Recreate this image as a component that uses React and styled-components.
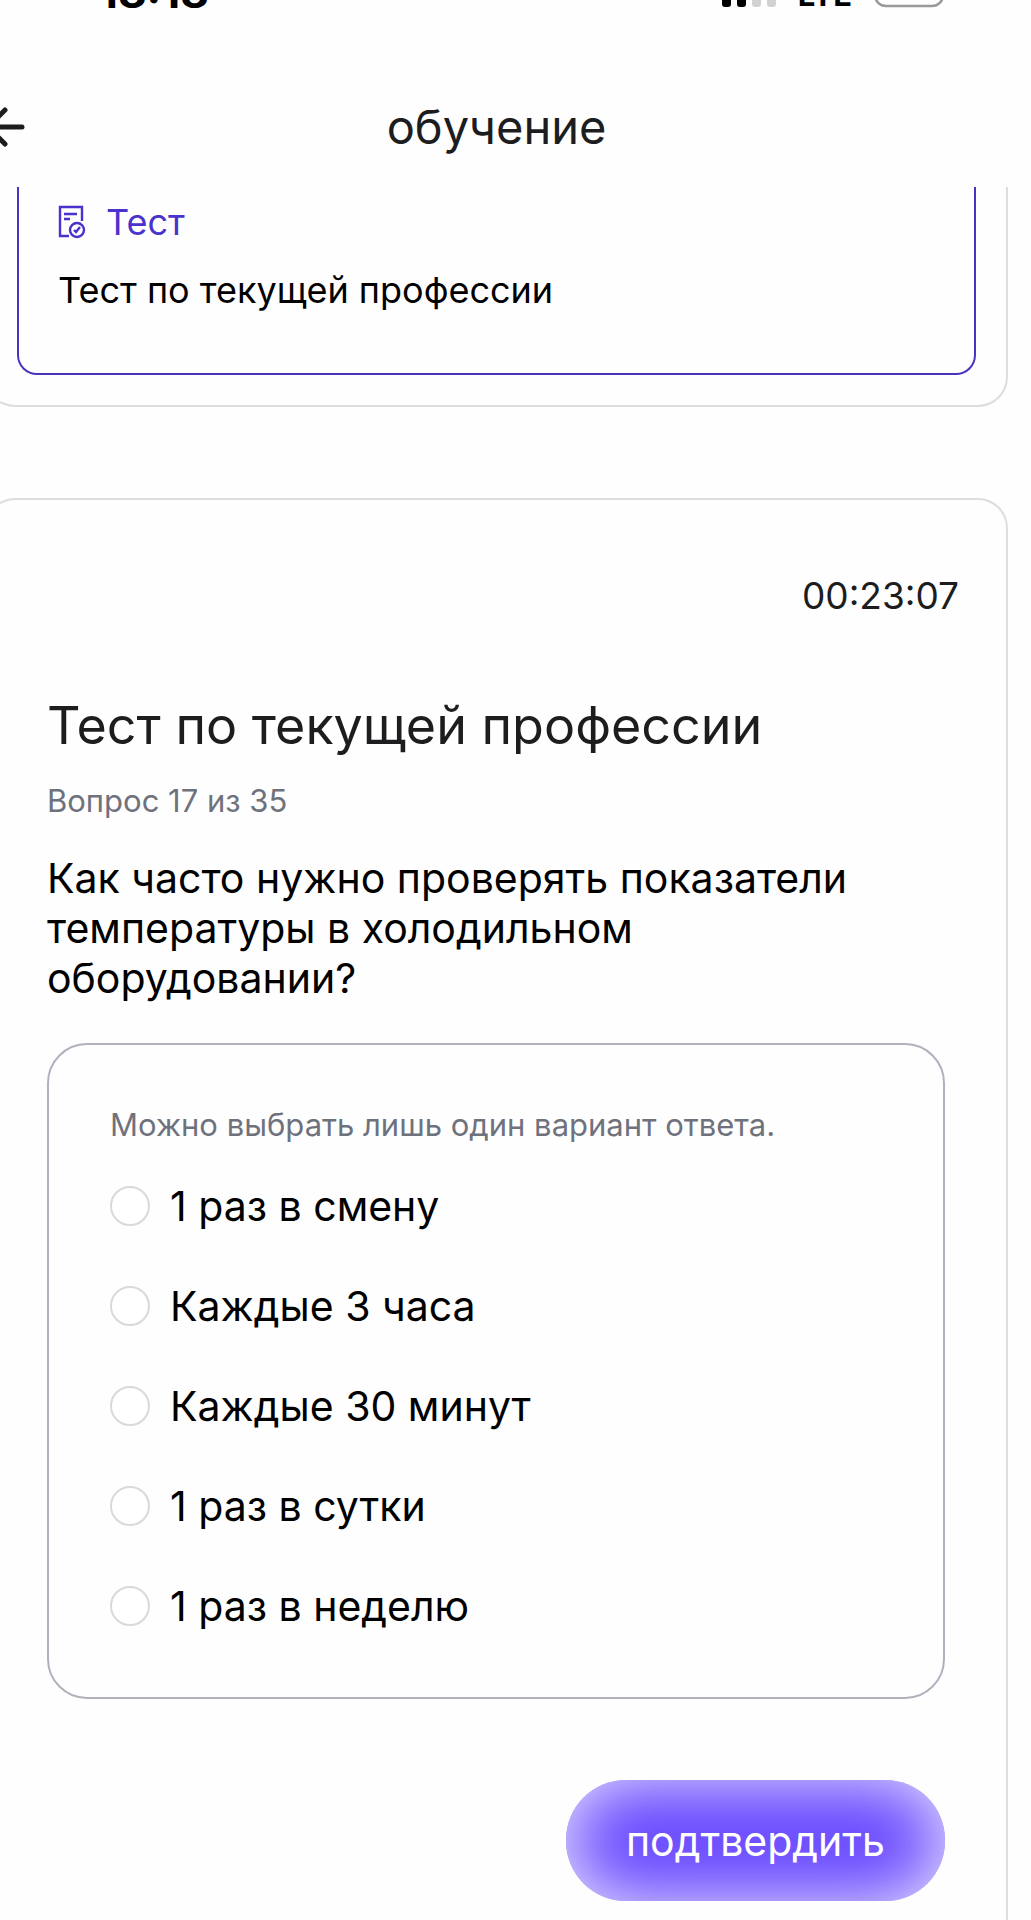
import React, { useState } from "react";
import styled, { createGlobalStyle } from "styled-components";

const GlobalStyle = createGlobalStyle`
  * {
    box-sizing: border-box;
  }

  body {
    margin: 0;
    background: #fefefe;
    color: #000000;
    font-family: "Inter", "Liberation Sans", sans-serif;
  }
`;

const Screen = styled.div`
  display: flex;
  flex-direction: column;
  height: 100vh;
  overflow: hidden;
`;

const StatusBar = styled.div`
  display: flex;
  justify-content: space-between;
  align-items: flex-end;
  flex-shrink: 0;
  height: 8px;
  padding: 0 87px 0 99px;
  overflow: hidden;
`;

const Time = styled.span`
  font-size: 44px;
  line-height: 32px;
  font-weight: 700;
`;

const StatusIcons = styled.div`
  display: flex;
  align-items: flex-end;
  gap: 22px;
`;

const Network = styled.span`
  font-size: 31px;
  line-height: 26px;
  font-weight: 700;
`;

const Header = styled.header`
  display: grid;
  grid-template-columns: 40px 1fr 78px;
  align-items: center;
  flex-shrink: 0;
  height: 179px;
  padding-top: 58px;
`;

const BackButton = styled.button`
  display: flex;
  padding: 0;
  border: none;
  background: none;
  cursor: pointer;
`;

const Title = styled.h1`
  margin: 0;
  font-size: 47px;
  line-height: 56px;
  font-weight: 400;
  color: #1d1d1f;
  text-align: center;
`;

const Content = styled.main`
  display: flex;
  flex-direction: column;
  flex: 1;
  gap: 91px;
  margin-left: -15px;
  padding-right: 23px;
  overflow: hidden;
`;

const LessonCard = styled.section`
  flex-shrink: 0;
  padding: 0 30px;
  padding-bottom: 30px;
  border: 2px solid #dddddd;
  border-top: none;
  border-radius: 0 0 30px 30px;
`;

const LessonItem = styled.a`
  display: block;
  padding: 13px 39px 61px;
  border: 2px solid #4a32bd;
  border-top: none;
  border-radius: 0 0 20px 20px;
  color: #000000;
  text-decoration: none;
`;

const LessonKind = styled.span`
  display: flex;
  align-items: center;
  gap: 20px;
  margin-bottom: 24px;
  font-size: 36px;
  line-height: 44px;
  color: #4a32cc;
`;

const LessonName = styled.span`
  display: block;
  font-size: 36px;
  line-height: 44px;
`;

const TestCard = styled.section`
  flex: 1 0 auto;
  padding: 74px 47px 0 60px;
  border: 2px solid #dddddd;
  border-bottom: none;
  border-radius: 30px 30px 0 0;
`;

const Timer = styled.time`
  display: block;
  margin-bottom: 78px;
  font-size: 37px;
  line-height: 44px;
  color: #1d1d1f;
  text-align: right;
`;

const TestBody = styled.form`
  display: flex;
  flex-direction: column;
  padding-right: 14px;
`;

const TestTitle = styled.h2`
  margin: 0 0 25px;
  font-size: 52px;
  line-height: 60px;
  font-weight: 400;
  color: #1d1d1f;
`;

const Muted = styled.p`
  margin: 0;
  font-size: 31px;
  line-height: 40px;
  color: #6f727d;
`;

const Question = styled.p`
  margin: 32px 0 40px;
  font-size: 41px;
  line-height: 50px;
`;

const Answers = styled.fieldset`
  min-width: 0;
  margin: 0 0 81px;
  padding: 60px 60px 66px 61px;
  border: 2px solid #afb2bc;
  border-radius: 40px;
`;

const AnswerList = styled.div`
  display: flex;
  flex-direction: column;
  gap: 50px;
  margin-top: 36px;
`;

const Answer = styled.label`
  display: flex;
  align-items: center;
  gap: 20px;
  font-size: 41px;
  line-height: 50px;
  cursor: pointer;
`;

const Radio = styled.input`
  appearance: none;
  flex-shrink: 0;
  width: 40px;
  height: 40px;
  margin: 0;
  border: 2px solid #d9d9d9;
  border-radius: 50%;
  background: #ffffff;
  cursor: pointer;

  &:checked {
    border: 12px solid #6f51ff;
  }
`;

const ConfirmButton = styled.button`
  align-self: flex-end;
  padding: 36px 60px 35px;
  border: none;
  border-radius: 60px;
  background: #6746ff;
  box-shadow: inset 0 0 70px rgba(255, 255, 255, 0.9);
  color: #ffffff;
  font-family: inherit;
  font-size: 41px;
  line-height: 50px;
  cursor: pointer;
`;

const answers = [
  "1 раз в смену",
  "Каждые 3 часа",
  "Каждые 30 минут",
  "1 раз в сутки",
  "1 раз в неделю",
];

const SignalIcon = () => (
  <svg width="54" height="24" viewBox="0 0 54 24" aria-hidden="true">
    <rect x="0" y="8" width="9" height="15" rx="3" fill="#000000" />
    <rect x="15" y="6" width="9" height="17" rx="3" fill="#000000" />
    <rect x="30" y="3" width="9" height="20" rx="3" fill="#d2d2d2" />
    <rect x="45" y="0" width="9" height="23" rx="3" fill="#d2d2d2" />
  </svg>
);

const BatteryIcon = () => (
  <svg width="70" height="34" viewBox="0 0 70 34" aria-hidden="true">
    <rect
      x="1"
      y="1"
      width="68"
      height="31"
      rx="11"
      fill="none"
      stroke="#999999"
      strokeWidth="2.5"
    />
  </svg>
);

const BackIcon = () => (
  <svg width="26" height="40" viewBox="0 0 26 40" aria-hidden="true">
    <path
      d="M22 20H-12M5 3L-12 20L5 37"
      fill="none"
      stroke="#1d1d1f"
      strokeWidth="5"
      strokeLinecap="round"
      strokeLinejoin="round"
    />
  </svg>
);

const TestIcon = () => (
  <svg width="28" height="34" viewBox="0 0 28 34" aria-hidden="true">
    <g fill="none" stroke="#4a32cc" strokeWidth="2.4">
      <path d="M11 31H2V2H24V16" />
      <path d="M6 9H19M6 14H12" />
      <circle cx="19" cy="25" r="7" />
      <path d="M16 25L18 27L22 22" />
    </g>
  </svg>
);

const App = () => {
  const [selected, setSelected] = useState(null);

  return (
    <>
      <GlobalStyle />
      <Screen>
        <StatusBar>
          <Time>18:18</Time>
          <StatusIcons>
            <SignalIcon />
            <Network>LTE</Network>
            <BatteryIcon />
          </StatusIcons>
        </StatusBar>
        <Header>
          <BackButton type="button" aria-label="Назад">
            <BackIcon />
          </BackButton>
          <Title>обучение</Title>
        </Header>
        <Content>
          <LessonCard>
            <LessonItem href="#test">
              <LessonKind>
                <TestIcon />
                Тест
              </LessonKind>
              <LessonName>Тест по текущей профессии</LessonName>
            </LessonItem>
          </LessonCard>
          <TestCard id="test">
            <Timer>00:23:07</Timer>
            <TestBody onSubmit={(e) => e.preventDefault()}>
              <TestTitle>Тест по текущей профессии</TestTitle>
              <Muted>Вопрос 17 из 35</Muted>
              <Question id="question">
                Как часто нужно проверять показатели температуры в холодильном
                оборудовании?
              </Question>
              <Answers aria-labelledby="question">
                <Muted>Можно выбрать лишь один вариант ответа.</Muted>
                <AnswerList>
                  {answers.map((answer) => (
                    <Answer key={answer}>
                      <Radio
                        type="radio"
                        name="answer"
                        checked={selected === answer}
                        onChange={() => setSelected(answer)}
                      />
                      {answer}
                    </Answer>
                  ))}
                </AnswerList>
              </Answers>
              <ConfirmButton type="submit">подтвердить</ConfirmButton>
            </TestBody>
          </TestCard>
        </Content>
      </Screen>
    </>
  );
};

export default App;
